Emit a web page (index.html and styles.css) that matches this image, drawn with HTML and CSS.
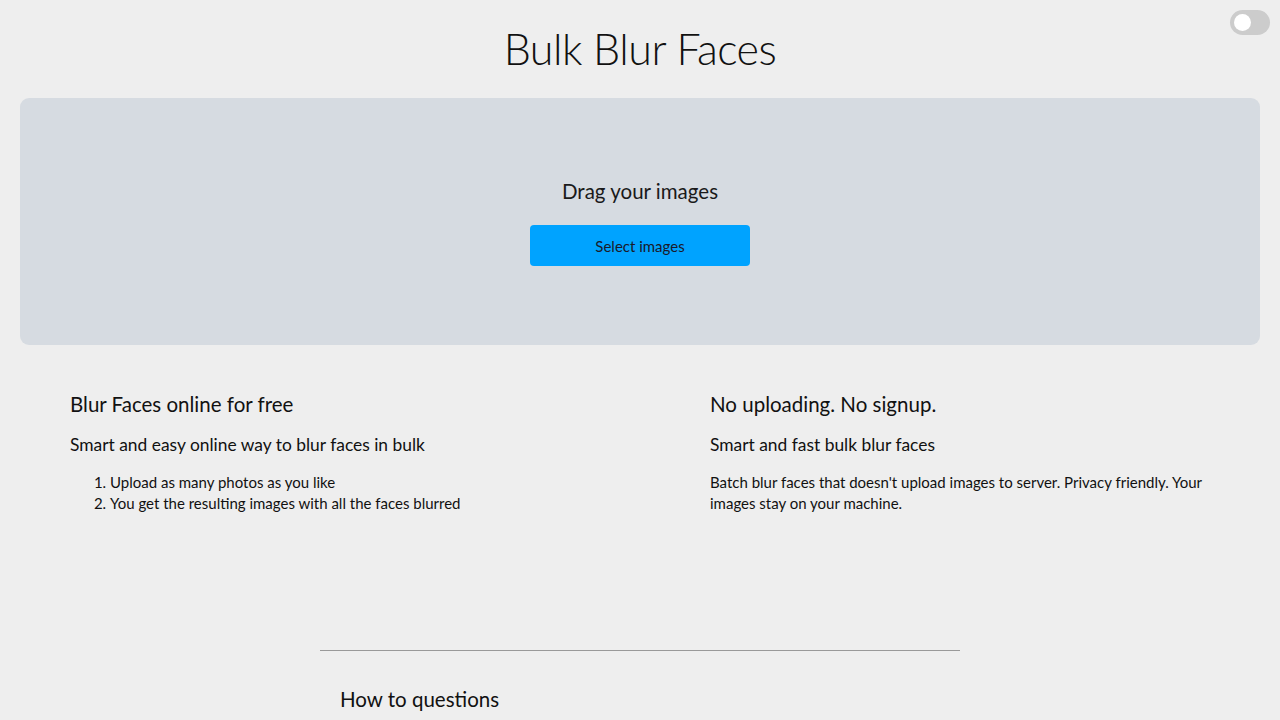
FILE: index.html
```html
<!DOCTYPE html>
<html lang="en">
<head>
<meta charset="utf-8">
<title>Bulk Blur Faces</title>
<link rel="stylesheet" href="styles.css">
</head>
<body>
<label class="toggle"><span class="knob"></span></label>
<header class="header">
  <h1 class="title">Bulk Blur Faces</h1>
</header>
<section class="dropzone">
  <p class="drop-text">Drag your images</p>
  <button class="select-btn">Select images</button>
</section>
<section class="features">
  <div class="feature">
    <h2 class="feature-title">Blur Faces online for free</h2>
    <h3 class="feature-sub">Smart and easy online way to blur faces in bulk</h3>
    <ol class="feature-list">
      <li>Upload as many photos as you like</li>
      <li>You get the resulting images with all the faces blurred</li>
    </ol>
  </div>
  <div class="feature">
    <h2 class="feature-title">No uploading. No signup.</h2>
    <h3 class="feature-sub">Smart and fast bulk blur faces</h3>
    <p class="feature-text">Batch blur faces that doesn't upload images to server. Privacy friendly. Your images stay on your machine.</p>
  </div>
</section>
<section class="faq">
  <hr class="divider">
  <h2 class="faq-title">How to questions</h2>
</section>
</body>
</html>
```
FILE: styles.css
```css
* { box-sizing: border-box; }
html, body { margin: 0; padding: 0; }
body {
  background: #eeeeee;
  color: #111;
  font-family: Lato, "Liberation Sans", sans-serif;
  position: relative;
  min-height: 720px;
  overflow: hidden;
}
.toggle {
  position: absolute;
  top: 10px;
  right: 10px;
  width: 40px;
  height: 25px;
  border-radius: 13px;
  background: #cccccc;
  display: block;
}
.knob {
  position: absolute;
  left: 4px;
  top: 4px;
  width: 17px;
  height: 17px;
  border-radius: 50%;
  background: #fff;
}
.header {
  display: flex;
  justify-content: center;
  padding-top: 23px;
  height: 98px;
}
.title {
  margin: 0;
  font-size: 43px;
  font-weight: 300;
  line-height: 52px;
  letter-spacing: -0.5px;
}
.dropzone {
  margin: 0 20px;
  height: 247px;
  background: #d6dbe1;
  border-radius: 9px;
  display: flex;
  flex-direction: column;
  align-items: center;
  justify-content: center;
}
.drop-text {
  margin: 0 0 20px;
  font-size: 20.5px;
  line-height: 28px;
  color: #1a1a1a;
}
.select-btn {
  width: 220px;
  height: 41px;
  border: none;
  border-radius: 4px;
  background: #00a3ff;
  color: #1a1a2a;
  font-family: inherit;
  font-size: 15px;
}
.features {
  display: grid;
  grid-template-columns: 1fr 1fr;
  column-gap: 40px;
  margin: 0 20px;
  padding-top: 45px;
  height: 305px;
}
.feature { padding: 0 50px; }
.feature-title {
  margin: 0 0 15px;
  font-size: 20.5px;
  font-weight: 400;
  line-height: 28px;
}
.feature-sub {
  margin: 0 0 15px;
  font-size: 17.4px;
  font-weight: 400;
  line-height: 24px;
}
.feature-list {
  margin: 0;
  padding-left: 40px;
  font-size: 15px;
  line-height: 21px;
}
.feature-text {
  margin: 0;
  font-size: 15px;
  line-height: 21px;
}
.faq {
  width: 640px;
  margin: 0 auto;
}
.divider {
  margin: 0;
  border: none;
  border-top: 1px solid #999;
}
.faq-title {
  margin: 34px 0 0 20px;
  font-size: 20.5px;
  font-weight: 400;
  line-height: 28px;
}
```
